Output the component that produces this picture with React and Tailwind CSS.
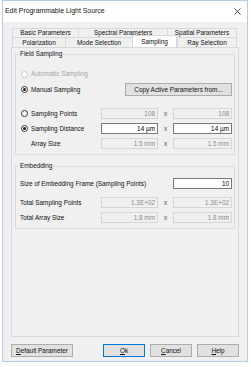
import React from "react";

function Radio({ checked, disabled }) {
    return (
        <span
            className={`flex h-[7px] w-[7px] shrink-0 items-center justify-center rounded-full border bg-white ${disabled ? "border-[#c8c8c8]" : "border-[#333333]"}`}
        >
            {checked && <span className="h-[3px] w-[3px] rounded-full bg-[#1a1a1a]" />}
        </span>
    );
}

function Box({ value, active, w = "w-[57px]" }) {
    return (
        <div
            className={`flex h-[11px] ${w} items-center justify-end border pr-[2px] ${active
                ? "border-[#7a7a7a] bg-white text-black"
                : "border-[#d6d6d6] bg-[#f0f0f0] text-[#8c8c8c]"
                }`}
        >
            {value}
        </div>
    );
}

function Pair({ a, b, active }) {
    return (
        <div className="flex items-center">
            <Box value={a} active={active} />
            <span className="w-[15px] text-center text-[#555]">x</span>
            <Box value={b} active={active} w="w-[59px]" />
        </div>
    );
}

function Tab({ label, w, selected }) {
    return (
        <div
            className={`flex ${w} items-center justify-center border-l border-t border-[#d9d9d9] ${selected
                ? "relative z-10 -mb-[1px] h-[13px] border-r border-b bg-white"
                : "h-full bg-[#f0f0f0]"
                }`}
        >
            {label}
        </div>
    );
}

function Btn({ children, w, focus }) {
    return (
        <div
            className={`flex h-[13px] ${w} items-center justify-center border bg-[#e1e1e1] ${focus ? "border-[#0078d7]" : "border-[#adadad]"}`}
        >
            {children}
        </div>
    );
}

export default function App() {
    return (
        <div className="h-[367px] w-[251px] bg-white pl-[2px] font-['Liberation_Sans',Arial,sans-serif] text-[6.4px] text-[#111]">
            <div className="flex h-[362px] w-[246px] flex-col border border-[#b3cde8] bg-[#f0f0f0]">
                {/* title bar */}
                <div className="flex h-[21px] items-center justify-between bg-white pl-[2px] pr-[6px] text-[6.9px]">
                    <span>Edit Programmable Light Source</span>
                    <svg width="7" height="7" viewBox="0 0 7 7">
                        <path d="M0.5 0.5 L6.5 6.5 M6.5 0.5 L0.5 6.5" stroke="#222" strokeWidth="0.8" />
                    </svg>
                </div>

                <div className="px-[8px] pt-[6px]">
                    {/* tabs */}
                    <div className="ml-[1px] flex h-[9px]">
                        <Tab label="Basic Parameters" w="w-[66px]" />
                        <Tab label="Spectral Parameters" w="w-[89px]" />
                        <div className="flex h-full w-[70px] items-center justify-center border-x border-t border-[#d9d9d9]">
                            Spatial Parameters
                        </div>
                    </div>
                    <div className="ml-[1px] flex h-[10px] items-end">
                        <Tab label="Polarization" w="w-[53px]" />
                        <Tab label="Mode Selection" w="w-[67px]" />
                        <Tab label="Sampling" w="w-[45px]" selected />
                        <div className="flex h-full w-[60px] items-center justify-center border-x border-t border-[#d9d9d9]">
                            Ray Selection
                        </div>
                    </div>

                    {/* panel */}
                    <div className="h-[290px] border border-[#d9d9d9] bg-[#f0f0f0] px-[3px] pt-[2px]">
                        <fieldset className="border border-[#dcdcdc] pb-[5px] pl-[5px] pr-[2px]">
                            <legend className="-ml-[2px] px-[1px] leading-[8px]">Field Sampling</legend>

                            <div className="mt-[11px] flex h-[10px] items-center gap-[3px] text-[#a6a6a6]">
                                <Radio disabled />
                                Automatic Sampling
                            </div>

                            <div className="mt-[4px] flex h-[13px] items-center justify-between">
                                <div className="flex items-center gap-[3px]">
                                    <Radio checked />
                                    Manual Sampling
                                </div>
                                <div className="flex h-[13px] w-[107px] items-center justify-center border border-[#adadad] bg-[#e1e1e1]">
                                    Copy Active Parameters from...
                                </div>
                            </div>

                            <div className="mt-[12px] flex h-[11px] items-center justify-between">
                                <div className="flex items-center gap-[3px]">
                                    <Radio />
                                    Sampling Points
                                </div>
                                <Pair a="108" b="108" />
                            </div>

                            <div className="mt-[4px] flex h-[11px] items-center justify-between">
                                <div className="flex items-center gap-[3px]">
                                    <Radio checked />
                                    Sampling Distance
                                </div>
                                <Pair a="14 µm" b="14 µm" active />
                            </div>

                            <div className="mt-[4px] flex h-[11px] items-center justify-between">
                                <span className="pl-[10px]">Array Size</span>
                                <Pair a="1.5 mm" b="1.5 mm" />
                            </div>
                        </fieldset>

                        <fieldset className="mt-[7px] border border-[#dcdcdc] pb-[5px] pl-[4px] pr-[2px]">
                            <legend className="-ml-[1px] px-[1px] leading-[8px]">Embedding</legend>

                            <div className="mt-[8px] flex h-[11px] items-center justify-between">
                                <span>Size of Embedding Frame (Sampling Points)</span>
                                <Box value="10" active w="w-[59px]" />
                            </div>

                            <div className="mt-[8px] flex h-[11px] items-center justify-between">
                                <span>Total Sampling Points</span>
                                <Pair a="1.3E+02" b="1.3E+02" />
                            </div>

                            <div className="mt-[4px] flex h-[11px] items-center justify-between">
                                <span>Total Array Size</span>
                                <Pair a="1.8 mm" b="1.8 mm" />
                            </div>
                        </fieldset>
                    </div>

                    {/* bottom buttons */}
                    <div className="mt-[7px] flex items-center">
                        <Btn w="w-[62px]">
                            <span><u>D</u>efault Parameter</span>
                        </Btn>
                        <div className="flex-1" />
                        <div className="flex gap-[5px]">
                            <Btn w="w-[42px]" focus>
                                <span><u>O</u>k</span>
                            </Btn>
                            <Btn w="w-[42px]">
                                <span><u>C</u>ancel</span>
                            </Btn>
                            <Btn w="w-[42px]">
                                <span><u>H</u>elp</span>
                            </Btn>
                        </div>
                    </div>
                </div>
            </div>
        </div>
    );
}
